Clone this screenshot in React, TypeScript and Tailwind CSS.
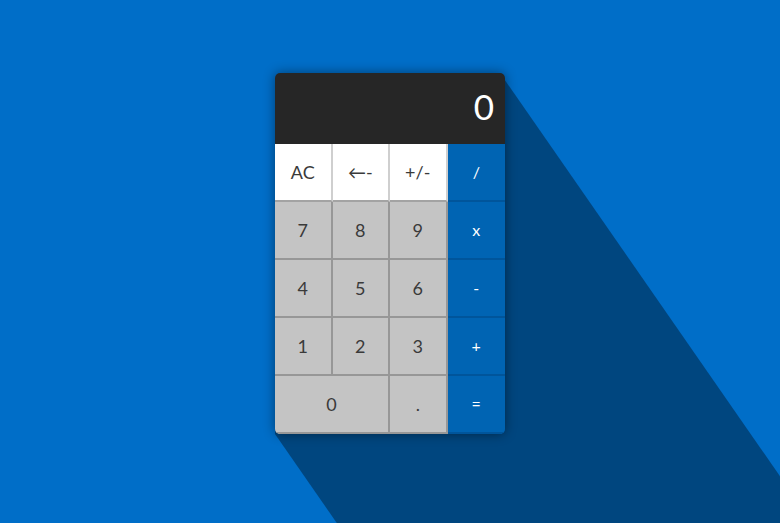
import React from "react";

type Key = { label: string; kind: "top" | "num" | "op"; span?: boolean; last?: boolean };

const keys: Key[] = [
  { label: "AC", kind: "top" },
  { label: "←-", kind: "top" },
  { label: "+/-", kind: "top" },
  { label: "/", kind: "op" },
  { label: "7", kind: "num" },
  { label: "8", kind: "num" },
  { label: "9", kind: "num" },
  { label: "x", kind: "op" },
  { label: "4", kind: "num" },
  { label: "5", kind: "num" },
  { label: "6", kind: "num" },
  { label: "-", kind: "op" },
  { label: "1", kind: "num" },
  { label: "2", kind: "num" },
  { label: "3", kind: "num" },
  { label: "+", kind: "op" },
  { label: "0", kind: "num", span: true, last: true },
  { label: ".", kind: "num", last: true },
  { label: "=", kind: "op", last: true },
];

function keyClass(k: Key) {
  let cls = "flex items-center justify-center h-[58px] ";
  if (k.kind === "top") cls += "bg-white text-[#3a3a3a] text-[18px] border-r-2 border-r-[#cfcfcf] border-b-2 border-b-[#a3a3a3] ";
  if (k.kind === "num") cls += "bg-[#c4c4c4] text-[#3a3a3a] text-[18px] border-r-2 border-r-[#979797] border-b-2 border-b-[#979797] ";
  if (k.kind === "op") cls += "bg-[#0064b3] text-white text-[16px] border-b-2 border-b-[#00559b] ";
  if (k.span) cls += "col-span-2 ";
  if (k.last) cls += "border-b-0 ";
  return cls;
}

export default function App() {
  return (
    <main className="relative h-[523px] w-[780px] overflow-hidden bg-[#006ec8] font-['Lato',sans-serif]">
      <div className="flex justify-center pt-[73px]">
        <div className="relative w-[230px]">
          {/* long shadow */}
          <svg className="absolute left-0 top-0 overflow-visible" width="230" height="361">
            <polygon points="225,0 825,864 600,1225 0,361 0,5" fill="#00467f" />
          </svg>
          <div className="relative rounded-[5px] overflow-hidden shadow-[0_0_12px_rgba(0,0,0,0.45)]">
            <div className="h-[71px] bg-[#262626] flex items-center justify-end pr-[11px] pb-[5px]">
              <span className="text-white text-[35px] leading-none">0</span>
            </div>
            <div className="grid grid-cols-4">
              {keys.map((k, i) => (
                <button key={i} className={keyClass(k)}>
                  {k.label}
                </button>
              ))}
            </div>
          </div>
        </div>
      </div>
    </main>
  );
}
